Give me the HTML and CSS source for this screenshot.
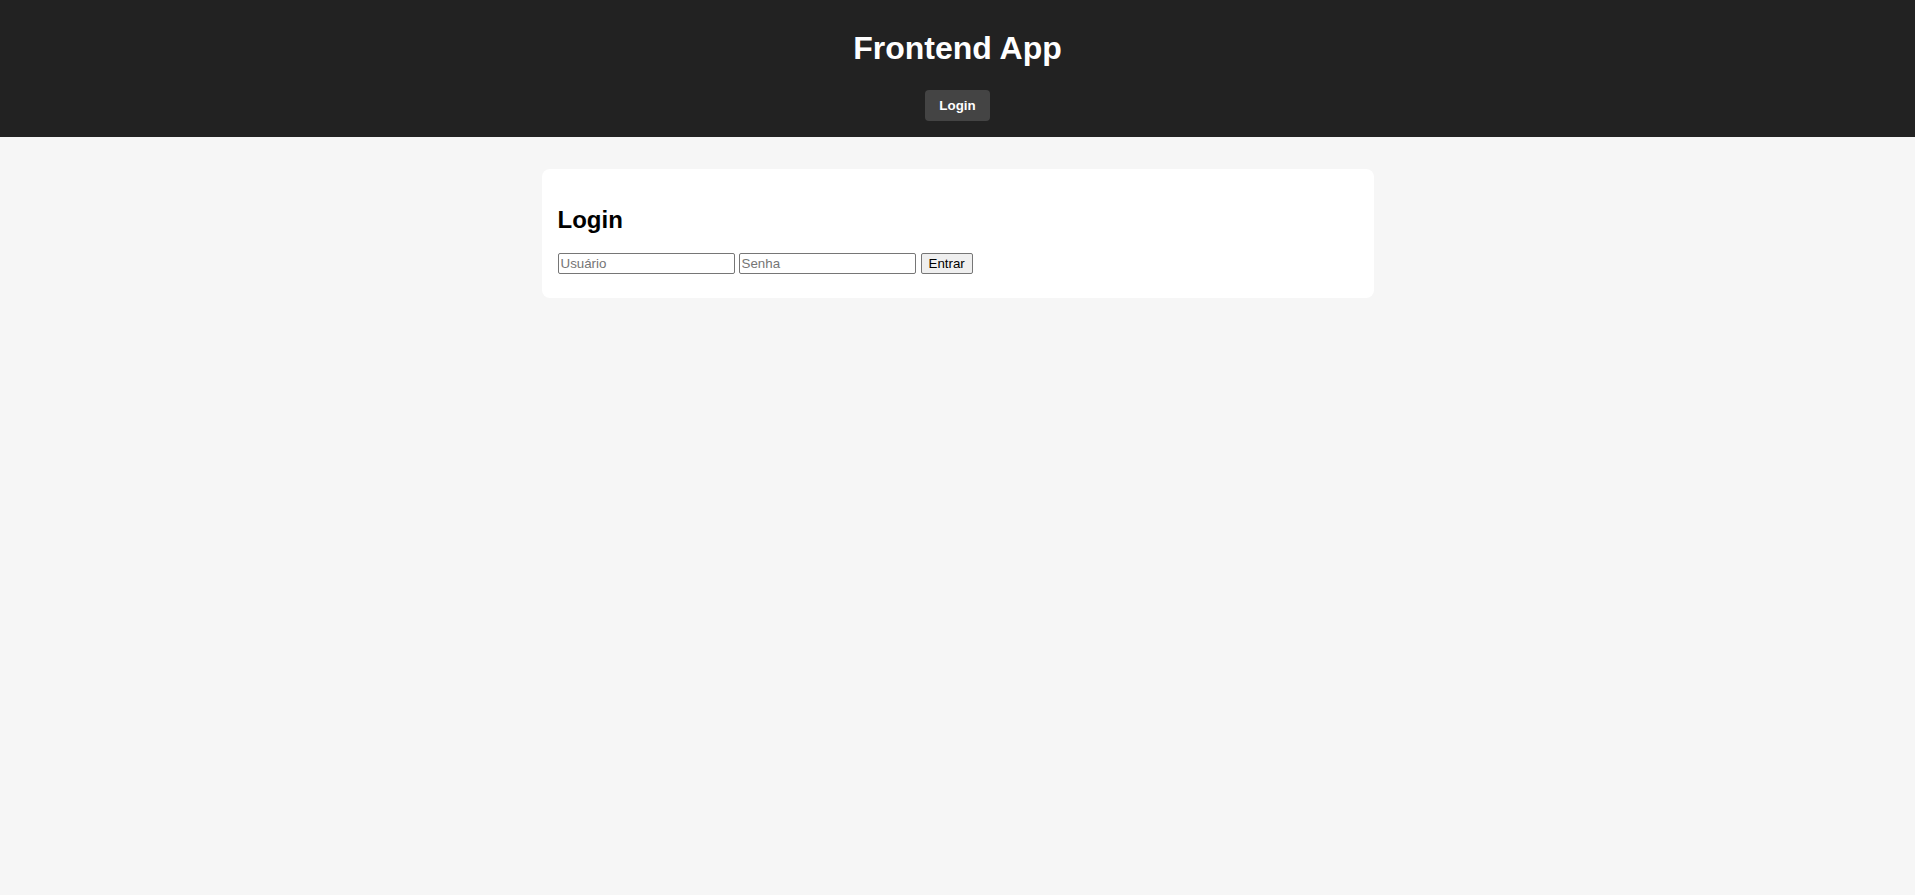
FILE: index.html
```html
<!DOCTYPE html>
<html lang="pt">
<head>
<meta charset="utf-8">
<title>Frontend App</title>
<link rel="stylesheet" href="styles.css">
</head>
<body>
<header class="site-header">
  <h1 class="site-title">Frontend App</h1>
  <nav class="site-nav">
    <button class="nav-btn" type="button">Login</button>
  </nav>
</header>
<main class="card">
  <h2 class="card-title">Login</h2>
  <form class="login-form">
    <input class="field" type="text" placeholder="Usuário">
    <input class="field" type="password" placeholder="Senha">
    <button class="submit-btn" type="submit">Entrar</button>
  </form>
</main>
</body>
</html>
```

FILE: styles.css
```css
* {
  box-sizing: border-box;
}

html, body {
  margin: 0;
  padding: 0;
}

body {
  background: #f6f6f6;
  font-family: "Liberation Sans", Arial, sans-serif;
  color: #000;
  min-height: 895px;
}

.site-header {
  background: #222222;
  color: #fff;
  padding: 30px 0 16px;
  display: flex;
  flex-direction: column;
  align-items: center;
}

.site-title {
  margin: 0 0 23px;
  font-size: 32px;
  line-height: 37px;
  font-weight: bold;
}

.site-nav {
  display: flex;
  justify-content: center;
}

.nav-btn {
  background: #444444;
  color: #fff;
  border: none;
  border-radius: 4px;
  height: 31px;
  padding: 0 14px;
  font-family: "Liberation Sans", Arial, sans-serif;
  font-size: 13.333px;
  font-weight: bold;
  line-height: 31px;
  cursor: pointer;
}

.card {
  display: block;
  max-width: 832px;
  margin: 32px auto 0;
  background: #fff;
  border-radius: 8px;
  padding: 16px 16px 24px;
}

.card-title {
  margin: 21px 0 19px;
  font-size: 24px;
  line-height: 28px;
  font-weight: bold;
}

.login-form {
  display: flex;
  align-items: center;
  gap: 4px;
  margin: 0;
}

.field {
  width: 177px;
  height: 21px;
  margin: 0;
  padding: 1px 2px;
  border: 1px solid #767676;
  border-radius: 2px;
  background: #fff;
  font-family: "Liberation Sans", Arial, sans-serif;
  font-size: 13.333px;
  color: #000;
}

.field::placeholder {
  color: #757575;
}

.submit-btn {
  margin: 0 0 0 1px;
  height: 21px;
  padding: 1px 7px;
  border: 1px solid #767676;
  border-radius: 2px;
  background: #efefef;
  color: #000;
  font-family: "Liberation Sans", Arial, sans-serif;
  font-size: 13.333px;
  line-height: 17px;
}
```
